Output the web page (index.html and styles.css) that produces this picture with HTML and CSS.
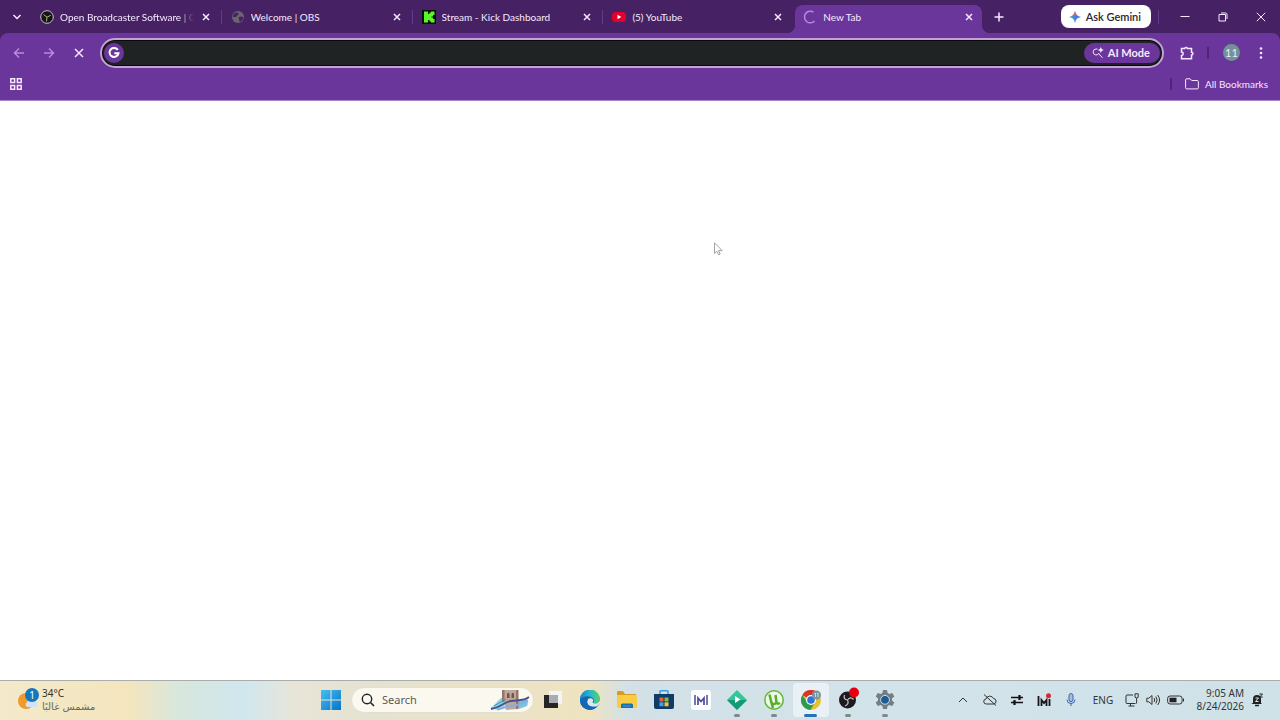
FILE: index.html
```html
<!DOCTYPE html>
<html lang="en">
<head>
  <meta charset="UTF-8">
  <meta name="viewport" content="width=device-width, initial-scale=1.0">
  <title>New Tab</title>
  <link rel="stylesheet" href="styles.css">
</head>
<body>
  <header class="browser">
    <div class="strip">
      <button class="tab-search" aria-label="Search tabs">
        <svg width="10" height="10" viewBox="0 0 10 10"><path d="M1.500 3l3.500 3.500L8.500 3" class="line bold"/></svg>
      </button>
      <nav class="tabs">
        <div class="tab">
          <a href="#">
            <svg width="14" height="14" viewBox="0 0 14 14"><circle cx="7" cy="7" r="6.300" fill="#161416" stroke="#c9c4cc"/><path d="M7 7.200L3.500 4.500M7 7.200l3.800-2M7 7.200l-.5 4.300" stroke="#a9b77a" fill="none"/></svg>
            <span class="title fade">Open Broadcaster Software | O</span>
          </a>
          <button class="close" aria-label="Close tab"><svg width="10" height="10" viewBox="0 0 10 10"><path d="M2 2l6 6M8 2l-6 6" class="line bold"/></svg></button>
        </div>
        <div class="tab">
          <a href="#">
            <svg width="14" height="14" viewBox="0 0 14 14"><circle cx="7" cy="7" r="6" fill="#6c6470"/><path d="M3 3.500c2-1.500 4-1 4.500 0S6 5.500 5.500 6.500 2.500 7 1.500 6.500M8 7c2-1 3.500-.5 4.500.5-.5 2-1.500 3.500-3.500 4.500-1-1-.5-2-1-3S7 7.500 8 7z" fill="#45245f"/></svg>
            <span class="title">Welcome | OBS</span>
          </a>
          <button class="close" aria-label="Close tab"><svg width="10" height="10" viewBox="0 0 10 10"><path d="M2 2l6 6M8 2l-6 6" class="line bold"/></svg></button>
        </div>
        <div class="tab">
          <a href="#">
            <svg width="14" height="14" viewBox="0 0 14 14"><path d="M0 0h14v14H0z" fill="#0a1208"/><path d="M2 1.500h4V4h1.500V2.500H9v-1h3.500V5H11v1.500H9.500v1H11V9h1.500v3.500H9v-1H7.500V10H6v2.500H2z" fill="#5bf52c"/></svg>
            <span class="title">Stream - Kick Dashboard</span>
          </a>
          <button class="close" aria-label="Close tab"><svg width="10" height="10" viewBox="0 0 10 10"><path d="M2 2l6 6M8 2l-6 6" class="line bold"/></svg></button>
        </div>
        <div class="tab">
          <a href="#">
            <svg width="14" height="14" viewBox="0 0 14 14"><rect x="0" y="2" width="14" height="10" rx="3.500" fill="#e4002b"/><path d="M5.500 4.800v4.400L9.300 7z" fill="#fff"/></svg>
            <span class="title">(5) YouTube</span>
          </a>
          <button class="close" aria-label="Close tab"><svg width="10" height="10" viewBox="0 0 10 10"><path d="M2 2l6 6M8 2l-6 6" class="line bold"/></svg></button>
        </div>
        <div class="tab active">
          <a href="#">
            <svg width="14" height="14" viewBox="0 0 14 14"><path d="M10.500 2.200A5.800 5.800 0 1 0 11.500 11" fill="none" stroke="#b48ad8" stroke-width="1.500"/></svg>
            <span class="title">New Tab</span>
          </a>
          <button class="close" aria-label="Close tab"><svg width="10" height="10" viewBox="0 0 10 10"><path d="M2 2l6 6M8 2l-6 6" class="line bold"/></svg></button>
        </div>
      </nav>
      <button class="new-tab" aria-label="New tab"><svg width="10" height="10" viewBox="0 0 10 10"><path d="M5 .5v9M.5 5h9" class="line bold"/></svg></button>
      <button class="gemini">
        <svg width="12" height="12" viewBox="0 0 12 12">
          <defs><linearGradient id="spark" x1="0" y1="0.600" x2="1" y2="0.400"><stop offset="0" stop-color="#4fae6a"/><stop offset=".4" stop-color="#4d86d8"/><stop offset=".7" stop-color="#3f7be8"/><stop offset="1" stop-color="#3a6fd0"/></linearGradient></defs>
          <path d="M6 0c.6 3.600 2.400 5.400 6 6-3.600.6-5.400 2.400-6 6-.6-3.600-2.400-5.400-6-6 3.600-.6 5.400-2.400 6-6z" fill="url(#spark)"/>
          <path d="M6 0c.3 1.800.9 3.200 1.900 4.100L6 5 4.200 4C5.100 3.100 5.700 1.800 6 0z" fill="#d9655a"/>
        </svg>
        Ask Gemini
      </button>
      <div class="window-buttons">
        <button aria-label="Minimize"><svg width="10" height="10" viewBox="0 0 10 10"><path d="M.5 4.500h9" class="line"/></svg></button>
        <button aria-label="Restore"><svg width="10" height="10" viewBox="0 0 10 10"><path d="M1 2.500h6.500V9H1zM3 1h4.500Q9 1 9 2.500V7" class="line"/></svg></button>
        <button aria-label="Close"><svg width="10" height="10" viewBox="0 0 10 10"><path d="M.8.8l8.400 8.400M9.200.8L.8 9.200" class="line"/></svg></button>
      </div>
    </div>

    <div class="toolbar">
      <div class="nav-buttons">
        <button class="dim" aria-label="Back"><svg width="12" height="12" viewBox="0 0 12 12"><path d="M11 6H1.500M6 1.500L1.500 6 6 10.500" class="line bold"/></svg></button>
        <button class="dim" aria-label="Forward"><svg width="12" height="12" viewBox="0 0 12 12"><path d="M1 6h9.500M6 1.500L10.500 6 6 10.500" class="line bold"/></svg></button>
        <button aria-label="Stop loading"><svg width="10" height="10" viewBox="0 0 10 10"><path d="M1 1l8 8M9 1L1 9" class="line bold"/></svg></button>
      </div>
      <form class="omnibox">
        <span class="google">
          <svg width="12" height="12" viewBox="0 0 12 12"><path d="M9.800 2.900A4.500 4.500 0 1 0 10.500 6.300H6.300" fill="none" stroke="#fff" stroke-width="2"/></svg>
        </span>
        <input type="text" aria-label="Address and search bar">
        <button type="button" class="ai-mode">
          <svg width="12" height="12" viewBox="0 0 12 12"><path d="M5.500 2H4A3 3 0 1 0 7 6M7 7l3.500 3.800" class="line"/><path d="M8.800 0q.4 2.600 3 3-2.600.4-3 3-.4-2.600-3-3 2.600-.4 3-3z" fill="currentColor"/></svg>
          AI Mode
        </button>
      </form>
      <div class="tools">
        <button aria-label="Extensions"><svg width="14" height="14" viewBox="0 0 14 14"><path d="M1.500 2.500h3.200a1.500 1.500 0 0 1 2.800 0h4v3.800a1.400 1.400 0 0 1 0 2.800v3.700h-10V9.500a1.700 1.700 0 0 0 0-3.400z" class="line bold"/></svg></button>
        <span class="rule"></span>
        <button class="avatar" aria-label="Profile">11</button>
        <button aria-label="Menu"><svg width="4" height="14" viewBox="0 0 4 14"><circle cx="2" cy="2.500" r="1.300"/><circle cx="2" cy="7" r="1.300"/><circle cx="2" cy="11.500" r="1.300"/></svg></button>
      </div>
    </div>

    <div class="bookmarks">
      <button aria-label="Apps"><svg width="12" height="12" viewBox="0 0 12 12"><path d="M.8.8h3.800v3.800H.8zM7.400.8h3.800v3.800H7.400zM.8 7.400h3.800v3.800H.8zM7.400 7.400h3.800v3.800H7.400z" class="line bold"/></svg></button>
      <span class="rule"></span>
      <a href="#" class="all">
        <svg width="14" height="12" viewBox="0 0 14 12"><path d="M.6 2Q.6.8 1.800.8h3.400l1.500 1.700h5.500q1.200 0 1.200 1.200v6q0 1.200-1.200 1.200H1.800Q.6 10.900.6 9.700z" class="line"/></svg>
        All Bookmarks
      </a>
    </div>
  </header>

  <main class="page">
    <svg class="cursor" width="9" height="14" viewBox="0 0 9 14"><path d="M.5.8v10.700l2.500-2.300 1.600 3.600 1.600-.7-1.500-3.500h3.500z" fill="#fff" stroke="#8c8c8c" stroke-width=".8"/></svg>
  </main>

  <footer class="taskbar">
    <a href="#" class="weather">
      <svg width="22" height="24" viewBox="0 0 22 24">
        <circle cx="9" cy="13" r="8" fill="#ef9a2b"/>
        <path d="M10 19a3 3 0 0 1 0-5 4 4 0 0 1 6-1 3 3 0 0 1 3 6z" fill="#d4e2f5"/>
        <circle cx="15" cy="7" r="7" fill="#1478bd"/>
        <text x="15" y="11" text-anchor="middle" class="count">1</text>
      </svg>
      <span class="weather-text"><span>34°C</span><span class="sky" lang="ar" dir="rtl">مشمس غالبًا</span></span>
    </a>

    <div class="dock">
      <button class="start" aria-label="Start">
        <svg width="20" height="20" viewBox="0 0 20 20">
          <defs><linearGradient id="win" x1="0" y1="0" x2="1" y2="1"><stop offset="0" stop-color="#45c0f2"/><stop offset="1" stop-color="#0873c6"/></linearGradient></defs>
          <path d="M0 0h9.500v9.500H0zM10.500 0H20v9.500h-9.500zM0 10.500h9.500V20H0zM10.500 10.500H20V20h-9.500z" fill="url(#win)"/>
        </svg>
      </button>
      <label class="search">
        <svg width="14" height="14" viewBox="0 0 14 14"><circle cx="6" cy="6" r="4.700" fill="none" stroke="#222" stroke-width="1.400"/><path d="M9.500 9.500L13 13" stroke="#222" stroke-width="1.600"/></svg>
        <input type="text" placeholder="Search" aria-label="Search">
        <svg width="40" height="22" viewBox="0 0 40 22">
          <path d="M0 19c4-1 8-9 13-11h4l-3 11-6 2z" fill="#8fd0e2"/>
          <path d="M26 13l10-3q3 3 1 7l-8 3z" fill="#7cc4dc"/>
          <path d="M12 1h16v19l-12 1z" fill="#c2a799"/>
          <path d="M12 1h2.500v12H12zM26 1h2.500v19H26z" fill="#94776c"/>
          <path d="M17 9V5q1.200-2.500 2.500 0v4M21.500 9V5q1.200-2.500 2.500 0v4" fill="#6e5656"/>
          <path d="M1 20c9-1 13-7 20-8s13 0 18-4" fill="none" stroke="#46518f" stroke-width="1.800"/>
          <path d="M7 20.500c8-1 10-4 16-4s9-3 15-5" fill="none" stroke="#84aee0" stroke-width="2"/>
          <path d="M4 17l12-7" stroke="#3c98b8" fill="none"/>
        </svg>
      </label>
      <div class="apps">
        <button class="app" aria-label="Task view">
          <svg width="20" height="20" viewBox="0 0 20 20"><path d="M6 1h13v13H6z" fill="#f4f4f4"/><path d="M1 5h14v13H1z" fill="#252525"/><path d="M6 5h9v8H6z" fill="#a9acb1"/></svg>
        </button>
        <button class="app" aria-label="Edge">
          <svg width="20" height="20" viewBox="0 0 20 20">
            <defs><linearGradient id="edge" x1="0" y1="0" x2="1" y2="0"><stop offset="0" stop-color="#1685cf"/><stop offset=".5" stop-color="#29b6cf"/><stop offset="1" stop-color="#59d45e"/></linearGradient></defs>
            <circle cx="10" cy="10" r="10" fill="#1565b5"/>
            <path d="M0 10a10 10 0 0 1 20-1c0 4-5 5-7 4 2-2 1-5-2-6-4-2-9 0-11 3z" fill="url(#edge)"/>
            <path d="M8 9c-3 5 2 9 9 7.500L20 13V10c-1 3-4 4-7 3-1-1 .5-2 .3-3C12.500 8 9.500 7.500 8 9z" fill="#dce9ec"/>
            <path d="M0 10c2-4 7-3 8-1-3 5 2 9 9 7.500C14 20 9 21 5 18.600 2 17 0 14 0 10z" fill="#1467b3"/>
          </svg>
        </button>
        <button class="app" aria-label="File Explorer">
          <svg width="22" height="20" viewBox="0 0 22 20"><path d="M1 2q0-1 1-1h5l2 3h11v5H1z" fill="#d99c22"/><path d="M1 5h19q1 0 1 1v11q0 1-1 1H2q-1 0-1-1z" fill="#f7cd45"/><path d="M5 18v-3q0-1.500 1.500-1.500h9Q17 13.500 17 15v3z" fill="#1671b4"/><path d="M7 16h8" stroke="#3f9ad6"/></svg>
        </button>
        <button class="app" aria-label="Microsoft Store">
          <svg width="20" height="20" viewBox="0 0 20 20"><path d="M6 4V1.500Q6 .8 7 .8h6q1 0 1 .7V4" fill="none" stroke="#37a0df" stroke-width="1.500"/><path d="M0 4h20v13q0 2-2 2H2q-2 0-2-2z" fill="#123a66"/><path d="M5.500 7.500h4v4h-4z" fill="#e8603c"/><path d="M10.500 7.500h4v4h-4z" fill="#7fbf3f"/><path d="M5.500 12.300h4v4h-4z" fill="#3aa4e4"/><path d="M10.500 12.300h4v4h-4z" fill="#f3c13a"/></svg>
        </button>
        <button class="app" aria-label="M app">
          <svg width="20" height="20" viewBox="0 0 20 20"><rect width="20" height="20" rx="3" fill="#fff"/><path d="M4 5v10M16 5v10" stroke="#4a4f86" stroke-width="1.500"/><path d="M7 15V8l3 3.500L13 8v7" fill="none" stroke="#4c4a9a" stroke-width="1.700"/></svg>
        </button>
        <button class="app open" aria-label="Player">
          <svg width="20" height="20" viewBox="0 0 20 20"><path d="M10 0l10 10-10 10L0 10z" fill="#35c596"/><path d="M0 10h20L10 20z" fill="#149a76"/><path d="M8 6v7l5.500-3.500z" fill="#fff"/></svg>
        </button>
        <button class="app open" aria-label="uTorrent">
          <svg width="20" height="20" viewBox="0 0 20 20"><circle cx="10" cy="10" r="9.200" fill="#eef8e6" stroke="#63b536" stroke-width="1.500"/><path d="M5.500 4.500L7.500 13q2.500 2.500 5-.5L11.500 5M12.500 12.500q1 2 3.500.5M7.500 13l1.500 5" fill="none" stroke="#56ae2c" stroke-width="2.500"/></svg>
        </button>
        <button class="app open current" aria-label="Chrome">
          <svg width="20" height="20" viewBox="0 0 20 20"><circle cx="10" cy="10" r="10" fill="#e8c12f"/><path d="M10 10L1.300 5A10 10 0 0 1 18.700 5z" fill="#d8342d"/><path d="M1.300 5A10 10 0 0 0 9.500 20l4.500-8-4 2-4-2z" fill="#2f9a4b"/><circle cx="10" cy="10" r="5" fill="#fff"/><circle cx="10" cy="10" r="3.800" fill="#2e74d6"/><circle cx="15.500" cy="5" r="4.500" fill="#7697a3"/><path d="M13.500 4l1-1v4M16 4l1-1v4" stroke="#dbe8ea" fill="none" stroke-width=".8"/></svg>
        </button>
        <button class="app open" aria-label="OBS Studio">
          <svg width="22" height="26" viewBox="0 0 22 26"><circle cx="10.500" cy="13" r="8.500" fill="#1d1a20"/><path d="M10.500 13Q6 12.500 7.500 8M10.500 13q3-4 6-.5M10.500 13q2 4-2.500 6" stroke="#c7c5ca" fill="none" stroke-width="1.200"/><circle cx="17" cy="5.500" r="5" fill="#e6000d"/></svg>
        </button>
        <button class="app open" aria-label="Settings">
          <svg width="20" height="20" viewBox="0 0 20 20"><path d="M8 0h4l.6 3 1.800 1 2.900-1 2 3.400-2.300 2v2.200l2.300 2-2 3.400-2.900-1-1.800 1-.6 3H8l-.6-3-1.800-1-2.900 1-2-3.400 2.300-2V8.400l-2.300-2 2-3.400 2.900 1 1.800-1z" fill="#747d84"/><circle cx="10" cy="9.800" r="4.400" fill="#1d5b93" stroke="#cfdbe2"/></svg>
        </button>
      </div>
    </div>

    <div class="tray">
      <button aria-label="Hidden icons"><svg width="10" height="10" viewBox="0 0 10 10"><path d="M1 7l4-4 4 4" class="ink"/></svg></button>
      <button aria-label="OneDrive"><svg width="14" height="14" viewBox="0 0 14 14"><path d="M3.500 11A2.500 2.500 0 0 1 3 6a4 4 0 0 1 7.500-.5A2.800 2.800 0 0 1 11 11zM1 1.500l12 11" class="ink"/></svg></button>
      <button aria-label="Audio mixer"><svg width="12" height="12" viewBox="0 0 12 12"><path d="M0 3.500h12M0 8.500h12" stroke="#111" stroke-width="1.600"/><path d="M8.500 1v5M3.500 6v5" stroke="#111" stroke-width="2.200"/></svg></button>
      <button aria-label="M app"><svg width="14" height="14" viewBox="0 0 14 14"><path d="M1.500 3v10M12.500 6v7M4.500 13V7l2.500 3 2.500-3v6" fill="none" stroke="#161616" stroke-width="1.800"/><circle cx="11.500" cy="2.800" r="2.500" fill="#d92632"/></svg></button>
      <button aria-label="Microphone"><svg width="10" height="14" viewBox="0 0 10 14"><rect x="3" y=".6" width="4" height="8" rx="2" fill="#a7bde2" stroke="#3c62ad"/><path d="M1 6.500a4 4 0 0 0 8 0M5 10.500V13" fill="none" stroke="#3c62ad"/></svg></button>
      <button class="lang">ENG</button>
      <button class="system" aria-label="Network, volume and battery">
        <svg width="14" height="14" viewBox="0 0 14 14"><path d="M8 2H2Q1 2 1 3v6.500q0 1 1 1h8.500M3.500 13h6M5.500 10.500V13M10 .8h3.200v3.500q-1.600 1.400-3.200 0zM11.600 5v5.500" class="ink"/></svg>
        <svg width="14" height="12" viewBox="0 0 14 12"><path d="M.8 4.200h2L6 1.500v9L2.800 7.800h-2zM8 4q1.500 2 0 4M9.800 2.500q2.700 3.500 0 7M11.600 1q4 5 0 10" class="ink"/></svg>
        <svg width="18" height="10" viewBox="0 0 18 10"><rect x=".6" y="1" width="14.500" height="8" rx="2.500" class="ink"/><path d="M2.500 2.700h7v4.600h-7z" fill="#222"/><path d="M16.500 3.500v3" class="ink"/></svg>
      </button>
      <button class="clock"><span>9:05 AM</span><span>8/24/2026</span></button>
      <button aria-label="Notifications"><svg width="12" height="14" viewBox="0 0 12 14"><path d="M2 10V6a4 4 0 0 1 8 0v4l1 1H0z" fill="#222"/><path d="M4 12.500h4" stroke="#222" stroke-width="1.500"/><path d="M4.500 5h3l-3 3.500h3" stroke="#dce6e8" fill="none"/><path d="M8.500 1h3L8.700 4h3" stroke="#222" fill="none"/></svg></button>
    </div>
  </footer>
</body>
</html>
```

FILE: styles.css
```css
*{
  margin: 0;
  padding: 0;
  box-sizing: border-box;
}
body{
  display: flex;
  flex-direction: column;
  min-height: 100vh;
  background-color: #fff;
  font: 11px/16px Lato, "Noto Sans", sans-serif;
}
button, input{
  border: 0;
  background: none;
  color: inherit;
  font: inherit;
  outline: none;
}
button{
  display: flex;
  align-items: center;
  justify-content: center;
}
a{
  color: inherit;
  text-decoration: none;
}
svg{
  display: block;
  flex-shrink: 0;
}
.line{
  fill: none;
  stroke: currentColor;
  stroke-width: 1;
}
.ink{
  fill: none;
  stroke: #333;
  stroke-width: 1;
}
.bold{
  stroke-width: 1.5;
}

/* tab strip */
.browser{
  background-color: #462264;
  color: #f6e9ff;
}
.strip{
  display: flex;
  height: 33px;
}
.tab-search{
  width: 31px;
  padding-left: 2px;
}
.tabs{
  display: flex;
  flex: 0 1 955px;
  min-width: 0;
  font-size: 10px;
}
.tab{
  display: flex;
  flex: 1;
  align-items: center;
  min-width: 0;
  padding: 0 10px 0 9px;
  background: linear-gradient(#673a91, #673a91) right center / 1px 14px no-repeat;
}
.tab a{
  display: flex;
  flex: 1;
  align-items: center;
  gap: 6px;
  min-width: 0;
}
.title{
  flex: 1;
  overflow: hidden;
  white-space: nowrap;
}
.fade{
  -webkit-mask-image: linear-gradient(90deg, #000 120px, transparent 134px);
  mask-image: linear-gradient(90deg, #000 120px, transparent 134px);
}
.close{
  width: 12px;
  height: 16px;
}
.tab.active{
  position: relative;
  margin: 5px 4px 0 1px;
  padding: 0 7px 4px 8px;
  border-radius: 8px 8px 0 0;
  background: #6b369c;
}
.tab:has(+ .active){
  background: none;
}
.active::before, .active::after{
  content: "";
  position: absolute;
  bottom: 0;
  width: 8px;
  height: 8px;
}
.active::before{
  right: 100%;
  background: radial-gradient(circle at 0 0, transparent 8px, #6b369c 8px);
}
.active::after{
  left: 100%;
  background: radial-gradient(circle at 100% 0, transparent 8px, #6b369c 8px);
}
.new-tab{
  width: 26px;
}
.gemini{
  gap: 5px;
  height: 23px;
  margin: 5px 0 0 auto;
  padding: 0 10px 0 8px;
  border-radius: 8px;
  background-color: #fff;
  color: #2a2530;
  font-weight: 600;
  white-space: nowrap;
}
.window-buttons{
  display: flex;
  margin-left: 7px;
  background: linear-gradient(#673a91, #673a91) left center / 1px 14px no-repeat;
}
.window-buttons button{
  width: 38px;
}
.window-buttons button:first-child{
  width: 46px;
  padding-left: 8px;
}

/* address bar */
.toolbar{
  display: flex;
  align-items: center;
  height: 39px;
  border-radius: 8px 8px 0 0;
  background-color: #6b369c;
}
.nav-buttons{
  display: flex;
  gap: 6px;
  padding: 0 9px 0 7px;
}
.nav-buttons button{
  width: 24px;
  height: 24px;
}
.dim{
  color: #b98add;
}
.omnibox{
  display: flex;
  flex: 1;
  align-items: center;
  height: 30px;
  padding: 0 2px;
  border: 2px solid #c3a2d4;
  border-radius: 15px;
  background-color: #1f2323;
  box-shadow: inset 0 0 0 1px #0b0810;
}
.omnibox input{
  flex: 1;
  min-width: 0;
  padding: 0 6px;
}
.google{
  display: grid;
  place-items: center;
  width: 20px;
  height: 20px;
  border-radius: 50%;
  background-color: #6b369c;
}
.ai-mode{
  gap: 4px;
  height: 20px;
  padding: 0 10px 0 8px;
  border-radius: 10px;
  background-color: #6b369c;
  font-weight: 700;
  white-space: nowrap;
}
.tools{
  display: flex;
  align-items: center;
  padding: 0 7px 0 11px;
}
.tools button{
  width: 24px;
  height: 24px;
}
.tools svg{
  fill: currentColor;
}
.rule{
  width: 2px;
  height: 12px;
  background-color: #4e2379;
}
.tools .rule{
  margin: 0 14px 0 8px;
}
.tools .avatar{
  width: 17px;
  height: 17px;
  margin-right: 9px;
  border-radius: 50%;
  background-color: #729297;
}

/* bookmarks bar */
.bookmarks{
  display: flex;
  align-items: center;
  height: 29px;
  padding: 0 12px 5px 10px;
  border-bottom: 1px solid #a987c4;
  background-color: #6b369c;
  font-size: 10px;
}
.bookmarks .rule{
  margin: 0 13px 0 auto;
}
.all{
  display: flex;
  align-items: center;
  gap: 6px;
}

/* page */
.page{
  position: relative;
  flex: 1;
}
.cursor{
  position: absolute;
  left: 714px;
  top: 141px;
}

/* taskbar */
.taskbar{
  display: flex;
  height: 40px;
  border-top: 1px solid #a9aeac;
  background: linear-gradient(90deg, #f3eacb 0, #f4e5bd 10%, #d8e7dd 14%, #d0e7ef 19%, #e8e5d8 23%, #e4e2d0 29%, #efe3c0 46%, #d3e1e6 49%, #d2e3ea 72%, #cfe2e8 100%);
  color: #333;
  font-family: "Noto Sans", "Open Sans", sans-serif;
}
.weather{
  display: flex;
  align-items: center;
  gap: 3px;
  width: 312px;
  padding: 0 0 2px 17px;
}
.count{
  fill: #fff;
  font-size: 10px;
}
.weather-text{
  display: flex;
  flex-direction: column;
  font-size: 10px;
  line-height: 13px;
}
.sky{
  color: #6d675a;
  font-family: "DejaVu Sans", sans-serif;
}
.dock{
  display: flex;
  align-items: center;
  padding-bottom: 1px;
}
.start{
  width: 37px;
  height: 36px;
}
.search{
  display: flex;
  align-items: center;
  gap: 7px;
  width: 183px;
  height: 26px;
  margin: 0 1px 0 2px;
  padding: 0 3px 0 9px;
  border: 1px solid #e2dfd0;
  border-radius: 13px;
  background-color: #fbf9ef;
}
.search input{
  flex: 1;
  width: 0;
}
.search input::placeholder{
  color: #5c5a55;
}
.apps{
  display: flex;
  width: 368px;
}
.app{
  position: relative;
  flex: 1;
  height: 34px;
}
.open::after{
  content: "";
  position: absolute;
  bottom: 0;
  width: 6px;
  height: 3px;
  border-radius: 2px;
  background-color: #81888c;
}
.current{
  border-radius: 4px;
  background-color: #eaf1f6;
}
.current::after{
  width: 13px;
  background-color: #2472b8;
}
.tray{
  display: flex;
  align-items: center;
  margin-left: auto;
  padding: 0 10px 2px 0;
}
.tray button{
  width: 27px;
  height: 34px;
}
.tray .lang{
  width: 38px;
  font-size: 10px;
}
.tray .system{
  gap: 7px;
  width: 66px;
}
.tray .clock{
  flex-direction: column;
  align-items: flex-end;
  width: 56px;
  font-size: 10px;
  line-height: 13px;
}
.tray button:last-child{
  width: 26px;
}
```
